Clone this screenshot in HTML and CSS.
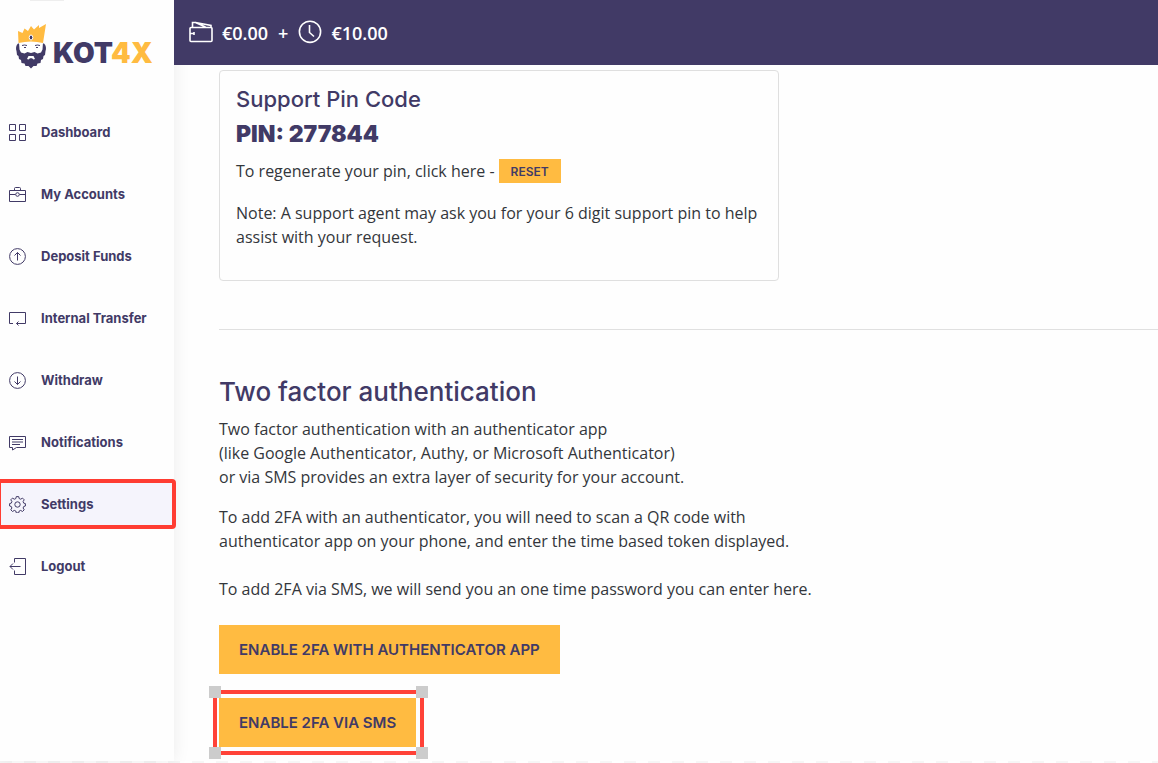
FILE: index.html
```html
<!DOCTYPE html>
<html lang="en">
<head>
    <meta charset="UTF-8">
    <meta name="viewport" content="width=device-width, initial-scale=1.0">
    <title>KOT4X - Settings</title>
    <link rel="stylesheet" href="styles.css">
</head>
<body>
    <div class="layout">
        <aside class="sidebar">
            <a class="logo" href="#">
                <svg class="logo-king" viewBox="0 0 32 46" width="32" height="46" aria-hidden="true">
                    <path fill="#413a66" d="M3 20.500C1 22 .5 26 1.500 28L2 32l1.500 1L4 36l2 1 .5 3 3 .5 1 2.500 3 0 2.500 2.500 2.500-2.500 3 0 1-2.500 3-.5.5-3 2-1 .5-3 1.500-1 .5-4c1-2 .5-6-1.500-7.500z"/>
                    <path fill="#fff" d="M4 19.500h24l-.5 7-1.500 3-3.500 1-3-1.500-3.500 1-3.500-1-3 1.500-3.500-1-1.500-3z"/>
                    <path fill="#fff" d="M12 36l1.500-3h5l1.500 3-1.500 .5-1.500-1.200h-2L13.500 36.500z"/>
                    <path fill="none" stroke="#413a66" stroke-width="1" d="M7 22.500q2.500-1 5 0M20 22.500q2.500-1 5 0M9 24.500h2M21 24.500h2"/>
                    <path fill="#ffbb41" d="M3.500 20L3 8l4.500 2 2-4.500 3.500 2.500 3-5 3 3.500L24 2v3l7-4-3 19q-12-3-24.500 0z"/>
                    <ellipse cx="16" cy="14.500" rx="1.800" ry="2.500" fill="#413a66" stroke="#fff"/>
                </svg>
                <span class="logo-text">KOT<span class="logo-accent">4X</span></span>
            </a>
            <nav class="nav">
                <a class="nav-item" href="#">
                    <svg class="nav-icon" viewBox="0 0 17 17"><path d="M.5.500h6v6h-6zM10.500.500h6v6h-6zM.5 10.500h6v6h-6zM10.500 10.500h6v6h-6z"/></svg>
                    Dashboard
                </a>
                <a class="nav-item" href="#">
                    <svg class="nav-icon" viewBox="0 0 17 17"><path d="M.5 4.500h16v11H.5zM5.500 4.500v-2q0-1 1-1h4q1 0 1 1v2M.5 8.500h6M10.500 8.500h6"/><circle cx="8.500" cy="8.500" r="1.800"/></svg>
                    My Accounts
                </a>
                <a class="nav-item" href="#">
                    <svg class="nav-icon" viewBox="0 0 17 17"><circle cx="8.500" cy="8.500" r="7.900"/><path d="M8.500 12.500v-8M5.500 7.500l3-3 3 3"/></svg>
                    Deposit Funds
                </a>
                <a class="nav-item" href="#">
                    <svg class="nav-icon" viewBox="0 0 17 17"><path d="M4 13.500H.5v-11h16v11h-9M9.500 11.500l-2 2 2 2"/></svg>
                    Internal Transfer
                </a>
                <a class="nav-item" href="#">
                    <svg class="nav-icon" viewBox="0 0 17 17"><circle cx="8.500" cy="8.500" r="7.900"/><path d="M8.500 4.500v8M5.500 9.500l3 3 3-3"/></svg>
                    Withdraw
                </a>
                <a class="nav-item" href="#">
                    <svg class="nav-icon" viewBox="0 0 17 17"><path d="M.5 2.500h16v11h-9l-4 2.500v-2.500h-3zM3 5.500h11M3 8h11M3 10.500h8"/></svg>
                    Notifications
                </a>
                <a class="nav-item active" href="#">
                    <svg class="nav-icon" viewBox="0 0 17 17"><circle cx="8.500" cy="8.500" r="2.700"/><path d="M7.300.6h2.400l.5 2 1.500.6 1.800-1.100 1.700 1.700-1.100 1.800.6 1.500 1.700.5v2.400l-1.700.5-.6 1.500 1.100 1.800-1.700 1.700-1.800-1.100-1.500.6-.5 1.900H7.300l-.5-1.900-1.500-.6-1.800 1.100-1.700-1.700 1.100-1.800-.6-1.500-1.700-.5V7.600l1.700-.5.6-1.500-1.100-1.800 1.700-1.700 1.800 1.100 1.500-.6z"/></svg>
                    Settings
                </a>
                <a class="nav-item" href="#">
                    <svg class="nav-icon" viewBox="0 0 17 17"><path d="M5.500 4.500v-4h11v16h-11v-4M11.500 8.500H1M4 5.500l-3 3 3 3"/></svg>
                    Logout
                </a>
            </nav>
        </aside>

        <div class="main">
            <header class="topbar">
                <svg class="topbar-icon" viewBox="0 0 24 24"><path d="M2 6.500Q1 6.500 1 7.500v12q0 1 1 1h20q1 0 1-1v-12q0-1-1-1zM3.500 6V1.500h3L22 4.500V6M6.500 1.500l10 4.500M1 12.500h4M5 11v3"/></svg>
                <span>€0.00</span>
                <span class="plus">+</span>
                <svg class="topbar-icon" viewBox="0 0 24 24"><circle cx="12" cy="10.800" r="10.600"/><path d="M11.500 4v7.500l4.500 4"/></svg>
                <span>€10.00</span>
            </header>

            <main class="content">
                <section class="card">
                    <h3>Support Pin Code</h3>
                    <p class="pin">PIN: 277844</p>
                    <p class="regenerate">To regenerate your pin, click here - <button class="btn btn-small" type="button">RESET</button></p>
                    <p class="note">Note: A support agent may ask you for your 6 digit support pin to help assist with your request.</p>
                </section>

                <hr>

                <section class="two-factor">
                    <h2>Two factor authentication</h2>
                    <p>Two factor authentication with an authenticator app<br>
                    (like Google Authenticator, Authy, or Microsoft Authenticator)<br>
                    or via SMS provides an extra layer of security for your account.</p>
                    <p>To add 2FA with an authenticator, you will need to scan a QR code with<br>
                    authenticator app on your phone, and enter the time based token displayed.</p>
                    <p class="sms-text">To add 2FA via SMS, we will send you an one time password you can enter here.</p>
                    <div class="actions">
                        <button class="btn" type="button">ENABLE 2FA WITH AUTHENTICATOR APP</button>
                        <div class="selected">
                            <button class="btn" type="button">ENABLE 2FA VIA SMS</button>
                            <div class="outline">
                                <i class="handle top left"></i>
                                <i class="handle top right"></i>
                                <i class="handle bottom left"></i>
                                <i class="handle bottom right"></i>
                            </div>
                        </div>
                    </div>
                </section>
            </main>
        </div>
    </div>
    <div class="edge"></div>
</body>
</html>
```

FILE: styles.css
```css
* {
    box-sizing: border-box;
}

body {
    display: flex;
    flex-direction: column;
    min-height: 100vh;
    margin: 0;
    background-color: #fefefe;
    color: #33363b;
    font-family: "Open Sans", sans-serif;
    font-size: 16px;
    line-height: 24px;
}

h2, h3, p {
    margin: 0;
}

.layout {
    display: flex;
    flex: 1;
}

/* Sidebar */
.sidebar {
    position: relative;
    flex: none;
    width: 174px;
    background-color: #fefefe;
    box-shadow: 0 0 16px rgba(0, 0, 0, 0.08);
}

.sidebar::before {
    content: "";
    position: absolute;
    top: 0;
    left: 30px;
    width: 34px;
    height: 1px;
    background-color: #eee;
}

.logo {
    display: flex;
    align-items: center;
    height: 91px;
    padding-left: 15px;
    text-decoration: none;
}

.logo-king {
    flex: none;
    margin-right: 6px;
}

.logo-text {
    padding-top: 14px;
    color: #413a66;
    font-family: Inter, sans-serif;
    font-size: 28px;
    font-weight: 900;
}

.logo-accent {
    color: #ffbb41;
}

.nav {
    display: flex;
    flex-direction: column;
    gap: 12px;
    padding-top: 16px;
}

.nav-item {
    display: flex;
    align-items: center;
    height: 50px;
    padding-left: 9px;
    color: #413a66;
    font-family: Inter, sans-serif;
    font-size: 13px;
    font-weight: 700;
    text-decoration: none;
}

.nav-icon {
    flex: none;
    width: 17px;
    height: 17px;
    margin-right: 15px;
    fill: none;
    stroke: #413a66;
}

.nav-item.active {
    margin-right: -2px;
    margin-left: -3px;
    padding-left: 8px;
    border: 4px solid #ff3c32;
    border-radius: 4px;
    background-color: #f5f4fc;
}

/* Main column */
.main {
    flex: 1;
    min-width: 0;
}

.topbar {
    position: relative;
    display: flex;
    align-items: center;
    height: 65px;
    padding-left: 15px;
    background-color: #413a66;
    color: #fff;
    font-size: 18px;
    font-weight: 600;
}

.topbar-icon {
    width: 24px;
    height: 24px;
    margin-right: 9px;
    overflow: visible;
    fill: none;
    stroke: #fff;
    stroke-width: 1.6;
}

.plus {
    margin: 0 10px;
}

.content {
    padding: 5px 0 10px 45px;
}

.card {
    max-width: 560px;
    padding: 16px 16px 31px;
    border: 1px solid #dfdfdf;
    border-radius: 4px;
}

h2, h3, .pin {
    color: #413a66;
    font-family: Inter, sans-serif;
}

h3 {
    font-size: 22px;
    font-weight: 500;
    line-height: 24px;
}

.pin {
    margin-top: 8px;
    font-size: 23px;
    font-weight: 900;
    line-height: 30px;
}

.regenerate {
    display: flex;
    align-items: center;
    gap: 4px;
    margin-top: 10px;
}

.note {
    margin-top: 18px;
}

hr {
    margin: 48px 0 46px;
    border: 0;
    border-top: 1px solid #e0e0e0;
}

h2 {
    margin-bottom: 9px;
    font-size: 26px;
    font-weight: 500;
    line-height: 32px;
}

.two-factor p {
    margin-bottom: 16px;
}

.two-factor .sms-text {
    margin: 24px 0;
}

.actions {
    display: flex;
    flex-direction: column;
    align-items: flex-start;
    gap: 24px;
}

.btn {
    display: block;
    height: 49px;
    padding: 0 20px;
    border: 0;
    background-color: #ffbb41;
    color: #413a66;
    font-family: Inter, sans-serif;
    font-size: 15px;
    font-weight: 600;
    cursor: pointer;
}

.btn-small {
    height: 24px;
    padding: 0 12px;
    font-size: 12px;
}

/* Selection frame around the SMS button */
.selected {
    position: relative;
}

.outline {
    position: absolute;
    top: -8px;
    right: -8px;
    bottom: -8px;
    left: -6px;
    border: 4px solid #ff4238;
    pointer-events: none;
}

.handle {
    position: absolute;
    width: 12px;
    height: 12px;
    background-color: #ccc;
}

.handle.top {
    top: -8px;
}

.handle.bottom {
    bottom: -8px;
}

.handle.left {
    left: -8px;
}

.handle.right {
    right: -8px;
}

.edge {
    height: 2px;
    background: repeating-linear-gradient(90deg, #f6f6f6 0 12px, #fff 12px 24px);
}
```
